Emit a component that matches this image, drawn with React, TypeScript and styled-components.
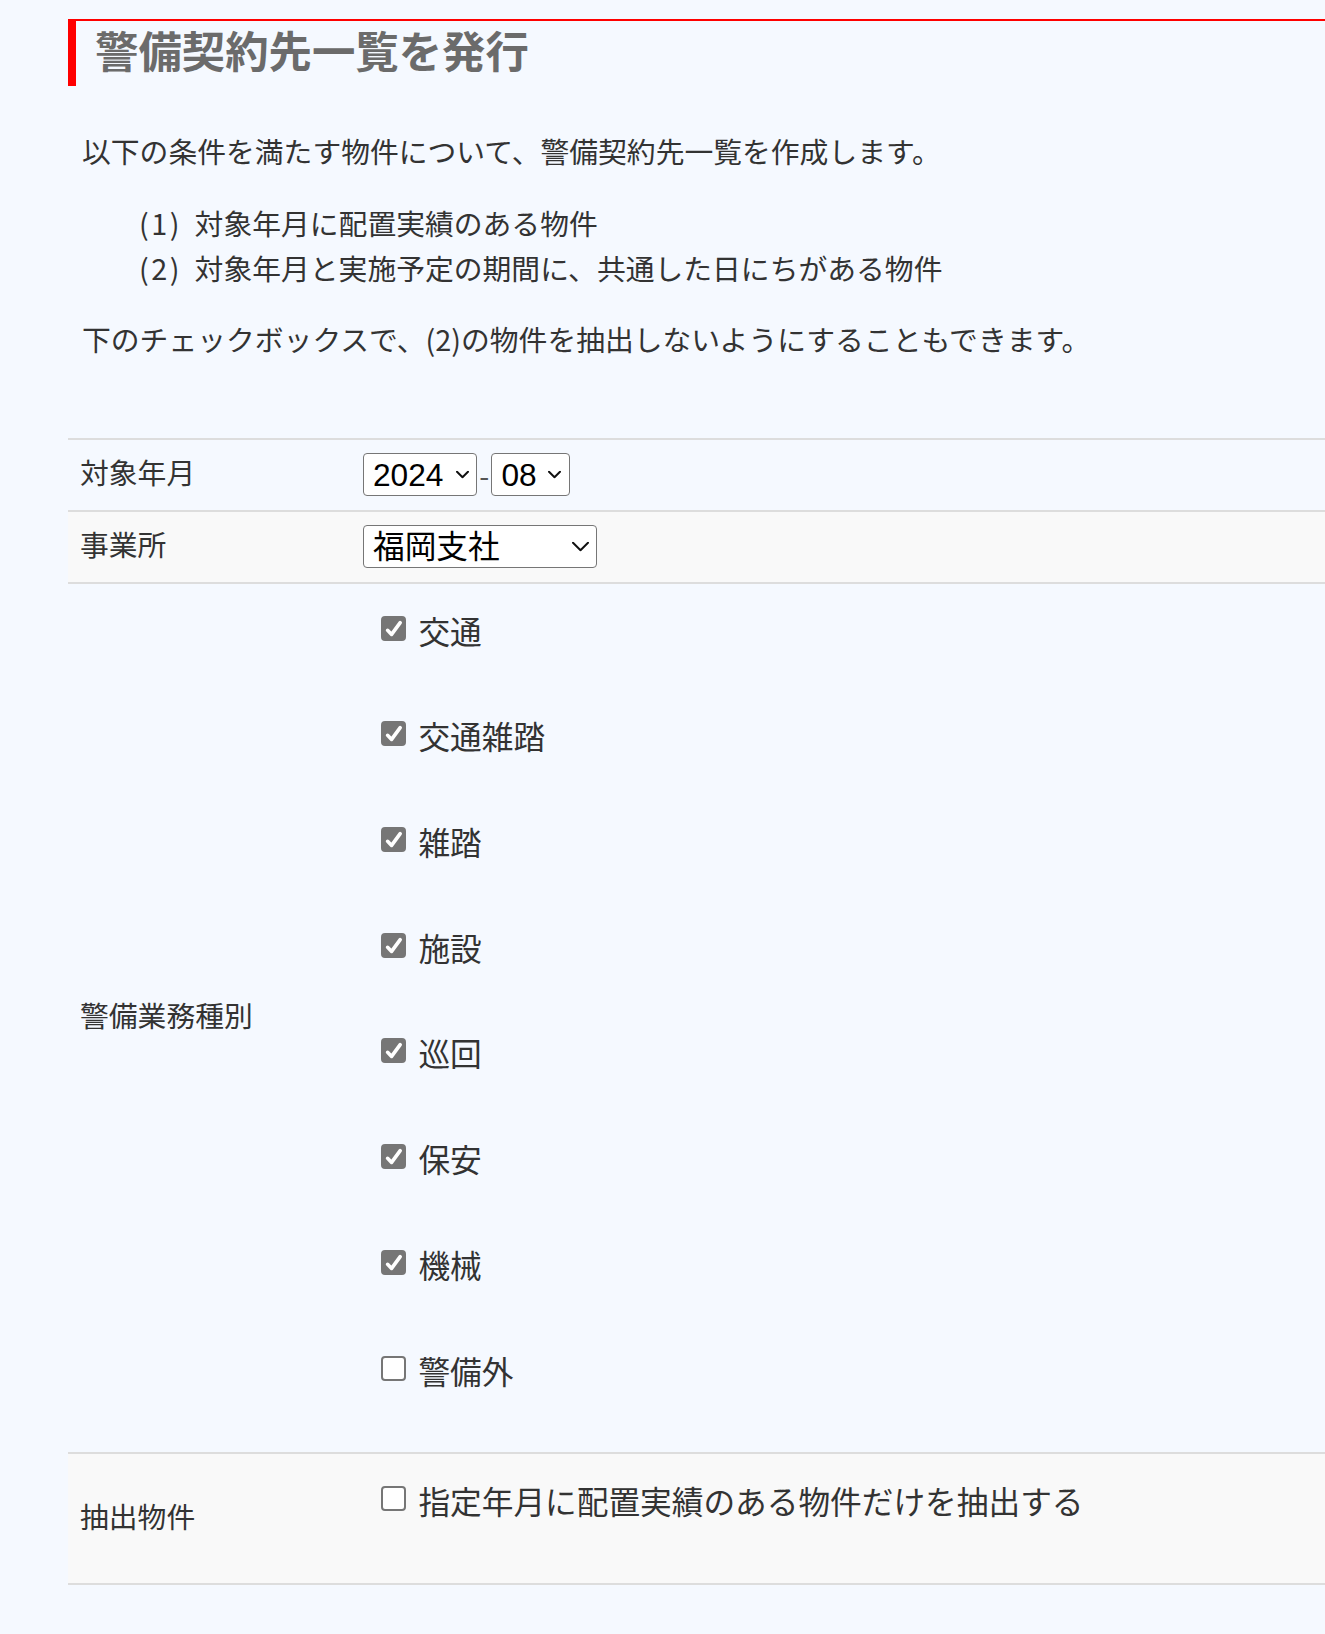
import React, { useState } from 'react';
import styled, { createGlobalStyle } from 'styled-components';

const GlobalStyle = createGlobalStyle`
  html, body {
    margin: 0;
    padding: 0;
    background: #f5f9ff;
  }
  body {
    font-family: "Noto Sans CJK JP", "Noto Sans", sans-serif;
    color: #333;
  }
`;

const Page = styled.main`
  padding: 19px 0 40px 68px;
`;

const TitleBar = styled.header`
  border-top: 2px solid #ff0000;
  border-left: 8px solid #ff0000;
  height: 65px;
  padding-left: 19px;
`;

const Title = styled.h1`
  margin: 0;
  font-size: 43.4px;
  font-weight: 700;
  color: #6b6b6b;
  line-height: 56px;
`;

const Intro = styled.section`
  margin-top: 43px;
  padding-left: 14px;
  font-size: 28.8px;
`;

const Para = styled.p<{ $gap?: number }>`
  margin: ${(p) => p.$gap ?? 0}px 0 0;
  line-height: 43.2px;
`;

const Conditions = styled.ul`
  list-style: none;
  margin: 27.7px 0 0;
  padding-left: 57px;
`;

const Condition = styled.li`
  line-height: 45.3px;
`;

const Marker = styled.span`
  display: inline-block;
  width: 55.6px;
  letter-spacing: 2.5px;
`;

const Table = styled.div`
  margin-top: 77px;
  border-top: 2px solid #dddddd;
`;

const Row = styled.div<{ $shaded?: boolean }>`
  display: grid;
  grid-template-columns: 283px 1fr;
  min-height: 70px;
  border-bottom: 2px solid #dddddd;
  background: ${(p) => (p.$shaded ? '#f9f9f9' : 'transparent')};
`;

const LabelCell = styled.div`
  display: flex;
  align-items: center;
  padding: 0 12px 7px;
  font-size: 28.8px;
  line-height: 43px;
  color: #333;
`;

const ValueCell = styled.div<{ $stack?: boolean }>`
  display: flex;
  flex-direction: ${(p) => (p.$stack ? 'column' : 'row')};
  align-items: ${(p) => (p.$stack ? 'flex-start' : 'center')};
  padding: ${(p) => (p.$stack ? '10px 12px 13px' : '0 12px')};
`;

const SelectWrap = styled.span`
  position: relative;
  display: inline-flex;
`;

const Select = styled.select<{ $w: number }>`
  appearance: none;
  -webkit-appearance: none;
  box-sizing: border-box;
  width: ${(p) => p.$w}px;
  height: 43px;
  margin: 0;
  padding: 0 0 0 9px;
  border: 1px solid #767676;
  border-radius: 4px;
  background: #ffffff;
  color: #000000;
  font-family: "Liberation Sans", "Noto Sans CJK JP", sans-serif;
  font-size: 31.68px;
  outline: none;
`;

const Chevron = styled.svg`
  position: absolute;
  top: 50%;
  right: 8.5px;
  transform: translateY(-50%);
  pointer-events: none;
`;

const Dash = styled.span`
  display: inline-block;
  width: 14.4px;
  text-align: center;
  font-size: 28.8px;
  line-height: 43px;
  color: #555;
`;

const CheckItem = styled.label`
  display: flex;
  align-items: center;
  height: 72px;
  margin-bottom: 33.7px;
  font-size: 31.68px;
  line-height: 44px;
  color: #333;
  cursor: pointer;
`;

const HiddenInput = styled.input`
  display: none;
`;

const Box = styled.span<{ $checked: boolean }>`
  display: inline-flex;
  flex: none;
  box-sizing: border-box;
  width: 25px;
  height: 25px;
  margin: 0 12.7px 3px 17.7px;
  border-radius: 4px;
  border: 2px solid #767676;
  background: ${(p) => (p.$checked ? '#767676' : '#ffffff')};
`;

type SelectProps = {
  width: number;
  chevronWidth: number;
  value: string;
  options: string[];
  onChange: (v: string) => void;
};

function DropDown({ width, chevronWidth, value, options, onChange }: SelectProps) {
  const h = chevronWidth * 0.5;
  return (
    <SelectWrap>
      <Select $w={width} value={value} onChange={(e) => onChange(e.target.value)}>
        {options.map((o) => (
          <option key={o} value={o}>
            {o}
          </option>
        ))}
      </Select>
      <Chevron width={chevronWidth} height={h + 2} viewBox={`0 0 ${chevronWidth} ${h + 2}`}>
        <polyline
          points={`1,1 ${chevronWidth / 2},${h} ${chevronWidth - 1},1`}
          fill="none"
          stroke="#111"
          strokeWidth="2"
          strokeLinecap="round"
          strokeLinejoin="round"
        />
      </Chevron>
    </SelectWrap>
  );
}

function CheckBox({
  label,
  checked,
  onToggle,
}: {
  label: string;
  checked: boolean;
  onToggle: () => void;
}) {
  return (
    <CheckItem>
      <HiddenInput type="checkbox" checked={checked} onChange={onToggle} />
      <Box $checked={checked}>
        {checked && (
          <svg width="21" height="21" viewBox="2 2 21 21">
            <polyline
              points="6.6,14.3 10.6,18.4 19.2,6.6"
              fill="none"
              stroke="#ffffff"
              strokeWidth="3.6"
              strokeLinecap="round"
              strokeLinejoin="round"
            />
          </svg>
        )}
      </Box>
      {label}
    </CheckItem>
  );
}

const TYPES = ['交通', '交通雑踏', '雑踏', '施設', '巡回', '保安', '機械', '警備外'];

export default function App() {
  const [year, setYear] = useState('2024');
  const [month, setMonth] = useState('08');
  const [office, setOffice] = useState('福岡支社');
  const [types, setTypes] = useState<Record<string, boolean>>(() => {
    const r: Record<string, boolean> = {};
    TYPES.forEach((t) => (r[t] = t !== '警備外'));
    return r;
  });
  const [onlyActual, setOnlyActual] = useState(false);

  return (
    <>
      <GlobalStyle />
      <Page>
        <TitleBar>
          <Title>警備契約先一覧を発行</Title>
        </TitleBar>

        <Intro>
          <Para>以下の条件を満たす物件について、警備契約先一覧を作成します。</Para>
          <Conditions>
            <Condition>
              <Marker>(1)</Marker>対象年月に配置実績のある物件
            </Condition>
            <Condition>
              <Marker>(2)</Marker>対象年月と実施予定の期間に、共通した日にちがある物件
            </Condition>
          </Conditions>
          <Para $gap={27}>下のチェックボックスで、(2)の物件を抽出しないようにすることもできます。</Para>
        </Intro>

        <Table>
          <Row>
            <LabelCell>対象年月</LabelCell>
            <ValueCell>
              <DropDown
                width={114}
                chevronWidth={13}
                value={year}
                options={['2022', '2023', '2024', '2025']}
                onChange={setYear}
              />
              <Dash>-</Dash>
              <DropDown
                width={78.5}
                chevronWidth={13}
                value={month}
                options={['01', '02', '03', '04', '05', '06', '07', '08', '09', '10', '11', '12']}
                onChange={setMonth}
              />
            </ValueCell>
          </Row>
          <Row $shaded>
            <LabelCell>事業所</LabelCell>
            <ValueCell>
              <DropDown
                width={234}
                chevronWidth={17}
                value={office}
                options={['福岡支社', '本社', '北九州支社']}
                onChange={setOffice}
              />
            </ValueCell>
          </Row>
          <Row>
            <LabelCell>警備業務種別</LabelCell>
            <ValueCell $stack>
              {TYPES.map((t) => (
                <CheckBox
                  key={t}
                  label={t}
                  checked={types[t]}
                  onToggle={() => setTypes((s) => ({ ...s, [t]: !s[t] }))}
                />
              ))}
            </ValueCell>
          </Row>
          <Row $shaded>
            <LabelCell>抽出物件</LabelCell>
            <ValueCell $stack>
              <CheckBox
                label="指定年月に配置実績のある物件だけを抽出する"
                checked={onlyActual}
                onToggle={() => setOnlyActual((v) => !v)}
              />
            </ValueCell>
          </Row>
        </Table>
      </Page>
    </>
  );
}
